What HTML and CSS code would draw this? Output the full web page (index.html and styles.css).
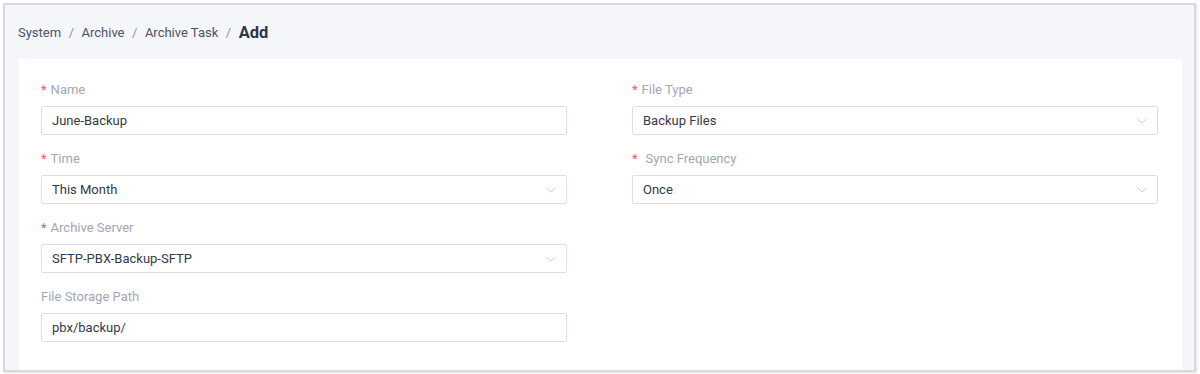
FILE: index.html
```html
<!DOCTYPE html>
<html>
<head>
<meta charset="utf-8">
<link rel="stylesheet" href="styles.css">
</head>
<body>
<div class="frame">
  <div class="breadcrumb">
    <span class="crumb">System</span><span class="sep">/</span>
    <span class="crumb">Archive</span><span class="sep">/</span>
    <span class="crumb">Archive Task</span><span class="sep">/</span>
    <span class="current">Add</span>
  </div>
  <div class="card">
    <div class="grid">
      <div class="col">
        <div class="field">
          <div class="label"><span class="req">*</span>Name</div>
          <div class="input">June-Backup</div>
        </div>
        <div class="field">
          <div class="label"><span class="req">*</span>Time</div>
          <div class="input select">This Month<svg class="chev" viewBox="0 0 12 7" width="10" height="6"><path d="M0.5 0.8 L6 6 L11.5 0.8" fill="none" stroke="#c4c7cf" stroke-width="1.1"/></svg></div>
        </div>
        <div class="field">
          <div class="label"><span class="req">*</span>Archive Server</div>
          <div class="input select">SFTP-PBX-Backup-SFTP<svg class="chev" viewBox="0 0 12 7" width="10" height="6"><path d="M0.5 0.8 L6 6 L11.5 0.8" fill="none" stroke="#c4c7cf" stroke-width="1.1"/></svg></div>
        </div>
        <div class="field">
          <div class="label">File Storage Path</div>
          <div class="input">pbx/backup/</div>
        </div>
      </div>
      <div class="col">
        <div class="field">
          <div class="label"><span class="req">*</span>File Type</div>
          <div class="input select">Backup Files<svg class="chev" viewBox="0 0 12 7" width="10" height="6"><path d="M0.5 0.8 L6 6 L11.5 0.8" fill="none" stroke="#c4c7cf" stroke-width="1.1"/></svg></div>
        </div>
        <div class="field">
          <div class="label"><span class="req wide">*</span>Sync Frequency</div>
          <div class="input select">Once<svg class="chev" viewBox="0 0 12 7" width="10" height="6"><path d="M0.5 0.8 L6 6 L11.5 0.8" fill="none" stroke="#c4c7cf" stroke-width="1.1"/></svg></div>
        </div>
      </div>
    </div>
  </div>
</div>
</body>
</html>
```

FILE: styles.css
```css
html, body {
  margin: 0;
  padding: 0;
  background: #ffffff;
}
body {
  font-family: Roboto, "Liberation Sans", Arial, sans-serif;
  width: 1200px;
  height: 374px;
  overflow: hidden;
}
.frame {
  margin: 3px 4px 0 3px;
  height: 365px;
  border: 2px solid #d9d9db;
  background: #f5f6fa;
  box-shadow: 1px 1px 2px rgba(0,0,0,0.12);
  padding: 0 12px 0 14px;
  display: flex;
  flex-direction: column;
}
.breadcrumb {
  height: 54px;
  display: flex;
  align-items: center;
  margin-left: -1px;
  font-size: 13px;
  color: #4b5265;
}
.crumb {
  color: #4b5265;
}
.sep {
  color: #8d93a3;
  margin: 0 7.5px 0 7.5px;
}
.current {
  font-size: 16.5px;
  font-weight: 700;
  color: #2e3649;
}
.card {
  flex: 1;
  background: #ffffff;
  padding: 20px 23px 0 22px;
}
.grid {
  display: grid;
  grid-template-columns: 526px 526px;
  column-gap: 65px;
}
.field {
  margin-bottom: 13px;
}
.label {
  height: 20px;
  line-height: 21px;
  font-size: 13px;
  color: #a0a7b7;
  margin-bottom: 7px;
}
.req {
  color: #f05a5a;
  margin-right: 4px;
}
.req.wide {
  margin-right: 8px;
}
.input {
  box-sizing: border-box;
  height: 29px;
  border: 1px solid #dcdfe8;
  border-radius: 2px;
  padding: 0 10px;
  display: flex;
  align-items: center;
  font-size: 13px;
  color: #333a47;
}
.select {
  justify-content: space-between;
}
```
